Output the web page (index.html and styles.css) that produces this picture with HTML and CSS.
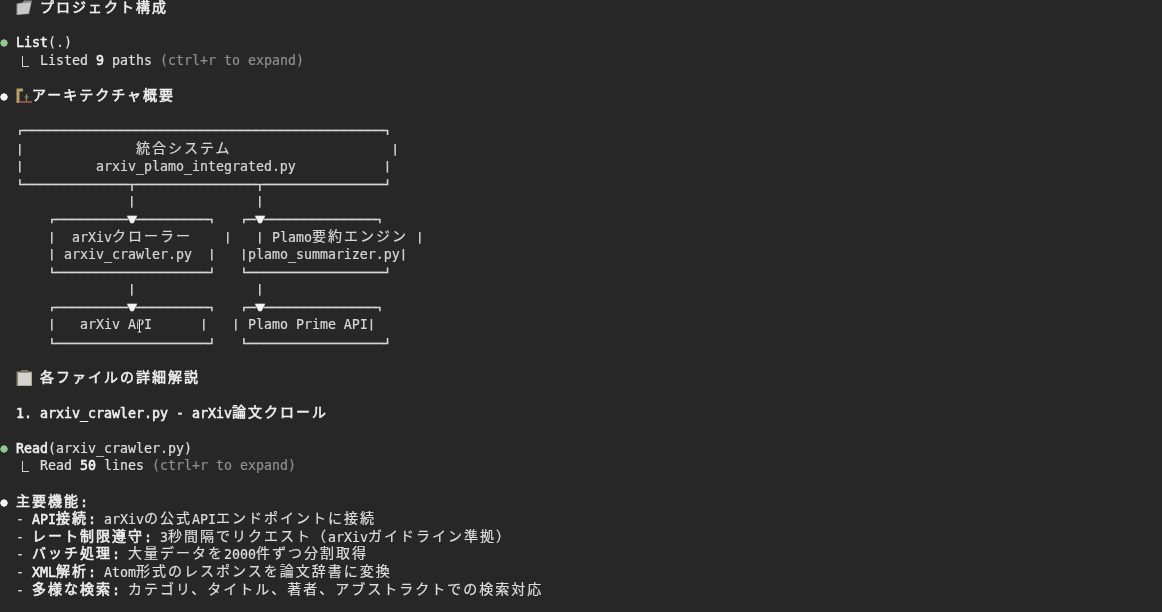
FILE: index.html
```html
<!DOCTYPE html>
<html lang="ja">
<head>
<meta charset="utf-8">
<title>Terminal</title>
<link rel="stylesheet" href="styles.css">
</head>
<body>
<main class="term">
<div class="row b">  <svg class="emoji" viewBox="0 0 16 16"><path d="M0.5 3.5 L0.5 15 L13 14 L16 0.5 L8 0.5 L6.5 2.5 Z" fill="#8f8f8f"/><path d="M1.5 4.5 L1.5 14.5 L12.5 13.5 L15 2.5 L4 3.5 Z" fill="#c8c8c8"/></svg> <span class="j">プロジェクト構成</span></div>
<div class="row"></div>
<div class="row"><span class="dot green"></span> <b>List</b>(.)</div>
<div class="row">  <span class="elbow"></span> Listed <b>9</b> paths <span class="dim">(ctrl+r to expand)</span></div>
<div class="row"></div>
<div class="row b"><span class="dot"></span> <svg class="emoji" viewBox="0 0 16 16"><path d="M0.5 0.5 H7 V3.5 H3.5 V15 H0.5 Z" fill="#b89f62"/><path d="M3.5 13 H16 V15 H3.5 Z" fill="#8a4f45"/><path d="M10.5 6 V13 M8.5 9 H12.5" stroke="#8d8d7c" stroke-width="1.2" fill="none"/></svg><span class="j">アーキテクチャ概要</span></div>
<div class="row"></div>
<div class="row box top">  ┌─────────────────────────────────────────────┐</div>
<div class="row box">  <span class="v">│</span>              <span class="j">統合システム</span>                    <span class="v">│</span></div>
<div class="row box">  <span class="v">│</span>         arxiv_plamo_integrated.py           <span class="v">│</span></div>
<div class="row box bot">  └─────────────┬───────────────┬───────────────┘</div>
<div class="row box">                <span class="v">│</span>               <span class="v">│</span></div>
<div class="row box top">      ┌─────────<span class="arrow">▼</span>─────────┐   ┌─<span class="arrow">▼</span>──────────────┐</div>
<div class="row box">      <span class="v">│</span>  arXiv<span class="j">クローラー</span>    <span class="v">│</span>   <span class="v">│</span> Plamo<span class="j">要約エンジン</span> <span class="v">│</span></div>
<div class="row box">      <span class="v">│</span> arxiv_crawler.py  <span class="v">│</span>   <span class="v">│</span>plamo_summarizer.py<span class="v">│</span></div>
<div class="row box bot">      └───────────────────┘   └─────────────────┘</div>
<div class="row box">                <span class="v">│</span>               <span class="v">│</span></div>
<div class="row box top">      ┌─────────<span class="arrow">▼</span>─────────┐   ┌─<span class="arrow">▼</span>──────────────┐</div>
<div class="row box">      <span class="v">│</span>   arXiv API      <span class="v">│</span>   <span class="v">│</span> Plamo Prime API<span class="v">│</span></div>
<div class="row box bot">      └───────────────────┘   └─────────────────┘</div>
<div class="row"></div>
<div class="row b">  <svg class="emoji" viewBox="0 0 16 16"><path d="M0.5 1.5 H16 V16 H0.5 Z" fill="#8f8468"/><path d="M2 2.5 H15.5 V15.5 H2 Z" fill="#d2d2ce"/><path d="M5 0 H12 V2.5 H5 Z" fill="#77736a"/></svg> <span class="j">各ファイルの詳細解説</span></div>
<div class="row"></div>
<div class="row b">  1. arxiv_crawler.py - arXiv<span class="j">論文クロール</span></div>
<div class="row"></div>
<div class="row"><span class="dot green"></span> <b>Read</b>(arxiv_crawler.py)</div>
<div class="row">  <span class="elbow"></span> Read <b>50</b> lines <span class="dim">(ctrl+r to expand)</span></div>
<div class="row"></div>
<div class="row b"><span class="dot"></span> <span class="j">主要機能</span>:</div>
<div class="row">  - <b>API<span class="j">接続</span>:</b> arXiv<span class="j">の公式</span>API<span class="j">エンドポイントに接続</span></div>
<div class="row">  - <b><span class="j">レート制限遵守</span>:</b> 3<span class="j">秒間隔でリクエスト（</span>arXiv<span class="j">ガイドライン準拠）</span></div>
<div class="row">  - <b><span class="j">バッチ処理</span>:</b> <span class="j">大量データを</span>2000<span class="j">件ずつ分割取得</span></div>
<div class="row">  - <b>XML<span class="j">解析</span>:</b> Atom<span class="j">形式のレスポンスを論文辞書に変換</span></div>
<div class="row">  - <b><span class="j">多様な検索</span>:</b> <span class="j">カテゴリ、タイトル、著者、アブストラクトでの検索対応</span></div>
</main>
<svg class="cursor" viewBox="0 0 7 14"><path d="M1 1 H6 M3.5 1 V13 M1 13 H6" stroke="#111" stroke-width="2.4" fill="none"/><path d="M1.5 1 H5.5 M3.5 1 V13 M1.5 13 H5.5" stroke="#eee" stroke-width="1" fill="none"/></svg>
</body>
</html>
```
FILE: styles.css
```css
html, body {
  margin: 0;
  height: 100%;
  overflow: hidden;
  background: #272727;
}
.term {
  margin-top: -1px;
  color: #dedede;
  font-family: "DejaVu Sans Mono", "Noto Sans CJK JP", monospace;
  font-size: 13.29px;
  -webkit-text-stroke: 0.2px;
  filter: blur(0.4px);
}
.row {
  height: 17.64px;
  line-height: 17.64px;
  white-space: pre;
}
.row b, .row.b {
  font-weight: 400;
  color: #f0f0f0;
  -webkit-text-stroke: 0.55px;
}
.j {
  font-family: "Noto Sans CJK JP", sans-serif;
  font-size: 14px;
  line-height: 1;
  letter-spacing: 2px;
  vertical-align: 1px;
}
.box {
  color: #d6d6d6;
}
.top, .bot {
  -webkit-text-stroke: 0.45px;
}
.top {
  clip-path: inset(0 0 5px 0);
}
.bot {
  line-height: 19.64px;
  clip-path: inset(4px 0 2px 0);
}
.v {
  display: inline-block;
  line-height: 1;
  -webkit-text-stroke: 0.35px;
  transform: scaleY(0.72);
}
.arrow {
  font-size: 16px;
  line-height: 1;
  margin: 0 -0.8px;
  color: #f4f4f4;
  vertical-align: -1px;
}
.dim {
  color: #8e8e8e;
}
.dot {
  display: inline-block;
  width: 8px;
  height: 8px;
  vertical-align: 0;
  background: radial-gradient(circle at 4px 4px, #f2f2f2 3.4px, transparent 3.9px);
}
.dot.green {
  background: radial-gradient(circle at 4px 4px, #8fc98f 3.4px, transparent 3.9px);
}
.elbow {
  display: inline-block;
  width: 16px;
  height: 11px;
  box-sizing: border-box;
  vertical-align: -2px;
  position: relative;
}
.elbow::before {
  content: "";
  position: absolute;
  left: 6px;
  top: 0;
  width: 7px;
  height: 11px;
  box-sizing: border-box;
  border-left: 1px solid #d0d0d0;
  border-bottom: 1px solid #d0d0d0;
}
.emoji {
  display: inline-block;
  width: 16px;
  height: 16px;
  overflow: visible;
  vertical-align: -3px;
}
.cursor {
  position: absolute;
  left: 136px;
  top: 319px;
  width: 7px;
  height: 14px;
}
```
